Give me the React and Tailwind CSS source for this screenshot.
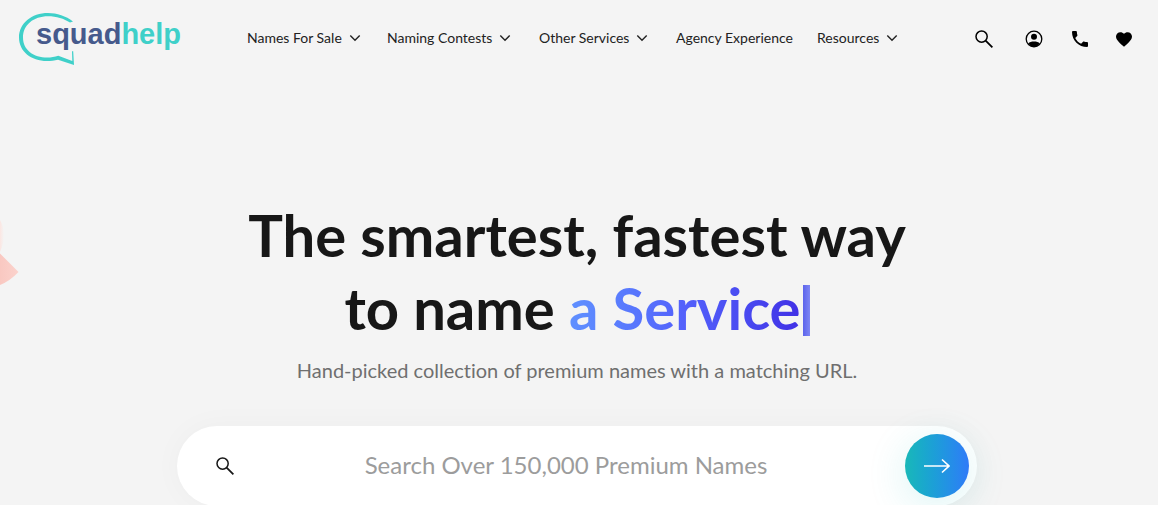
const navItems = [
  { label: "Names For Sale", menu: true },
  { label: "Naming Contests", menu: true },
  { label: "Other Services", menu: true },
  { label: "Agency Experience", menu: false },
  { label: "Resources", menu: true },
];

function Chevron() {
  return (
    <svg viewBox="0 0 12 8" className="h-2 w-3" fill="none" stroke="#222" strokeWidth="1.4" aria-hidden="true">
      <path d="M1.3 1.5 6 6.2l4.7-4.7" />
    </svg>
  );
}

function SearchIcon() {
  return (
    <svg viewBox="0 0 20 20" className="size-5" fill="none" stroke="currentColor" strokeWidth="1.5" aria-hidden="true">
      <circle cx="7.6" cy="7.6" r="5.6" />
      <path d="M11.6 11.6 18.4 18.4" strokeWidth="1.8" />
    </svg>
  );
}

function AccountIcon() {
  return (
    <svg viewBox="0 0 20 20" className="size-5" aria-hidden="true">
      <circle cx="10" cy="10" r="7.8" fill="none" stroke="currentColor" strokeWidth="1.3" />
      <circle cx="10" cy="7.8" r="3" fill="currentColor" />
      <path d="M4.2 14.6C5.4 13 7.6 12.600 10 12.600s4.600.4 5.800 2A7.600 7.600 0 0 1 10 18a7.600 7.600 0 0 1-5.800-3.400Z" fill="currentColor" />
    </svg>
  );
}

function PhoneIcon() {
  return (
    <svg viewBox="3 3 18 18" className="size-4" fill="currentColor" aria-hidden="true">
      <path d="M6.62 10.79c1.44 2.83 3.76 5.14 6.59 6.59l2.2-2.2c.27-.27.67-.36 1.02-.24 1.12.37 2.33.57 3.57.57.55 0 1 .45 1 1V20c0 .55-.45 1-1 1-9.39 0-17-7.61-17-17 0-.55.45-1 1-1h3.5c.55 0 1 .45 1 1 0 1.25.2 2.45.57 3.57.11.35.03.74-.25 1.02l-2.2 2.2z" />
    </svg>
  );
}

function HeartIcon() {
  return (
    <svg viewBox="2 3 20 18.4" className="h-[15px] w-4" fill="currentColor" aria-hidden="true">
      <path d="m12 21.35-1.45-1.32C5.4 15.36 2 12.28 2 8.5 2 5.42 4.42 3 7.5 3c1.74 0 3.41.81 4.5 2.09C13.09 3.81 14.76 3 16.5 3 19.58 3 22 5.42 22 8.5c0 3.78-3.4 6.86-8.55 11.54L12 21.35z" />
    </svg>
  );
}

function Logo() {
  return (
    <a href="#home" aria-label="squadhelp" className="block">
      <svg viewBox="0 0 166 54" className="h-[54px] w-[166px]" aria-hidden="true">
        <path
          fill="#3fd0c9"
          d="M54 8.500C47 3 38 0 29 0 12.500 0 0 10.500 0 24.500 0 38.500 12 48 28 48c4 0 7.500-.4 11-1.300L55 52 54.200 38.200l-1.200 0 .3 9.800-14-5.200c-3.500 1.200-7.300 1.800-11 1.800C14.500 44.600 4 37 4 24.500 4 12 14.500 3.300 29 3.300c8.500 0 16 2.300 22 6.300Z"
        />
        <text x="17" y="31" fontFamily="'Liberation Sans', Arial, sans-serif" fontSize="29" fontWeight="700">
          <tspan fill="#465a8c">squad</tspan><tspan fill="#3fd0c9">help</tspan>
        </text>
      </svg>
    </a>
  );
}

export default function App() {
  return (
    <div className="relative min-h-screen overflow-hidden bg-[#f4f4f4] font-['Lato',sans-serif] text-[#171717] [font-variant-ligatures:none]">
      <svg viewBox="0 0 20 90" className="absolute top-[210px] left-0 h-[90px] w-5" aria-hidden="true">
        <defs>
          <linearGradient id="wedge" x1="0" y1="0" x2="1" y2="0">
            <stop offset="0" stopColor="#f9c8c1" />
            <stop offset="1" stopColor="#fbd2cc" />
          </linearGradient>
          <linearGradient id="haze" x1="0" y1="0" x2="1" y2="0">
            <stop offset="0" stopColor="#fbe6e2" />
            <stop offset="1" stopColor="#f4f4f4" />
          </linearGradient>
        </defs>
        <path d="M0 10Q8 24 0 42Z" fill="url(#haze)" />
        <path d="M0 43.500 18.500 62Q10 71 0 75Z" fill="url(#wedge)" />
      </svg>

      <header className="flex h-20 items-center pr-[26px] pb-0.5 pl-[19px]">
        <div className="pt-0.5">
          <Logo />
        </div>
        <nav aria-label="Main" className="ml-[62px] grid grid-cols-[140px_152px_137px_141px_auto] pb-0.5 text-sm text-[#222]">
          {navItems.map((item) =>
            item.menu ? (
              <button key={item.label} type="button" className="flex items-center gap-[7px] whitespace-nowrap">
                {item.label}
                <Chevron />
              </button>
            ) : (
              <a key={item.label} href="#agency" className="whitespace-nowrap">
                {item.label}
              </a>
            )
          )}
        </nav>
        <div className="ml-auto flex items-center gap-7 text-black">
          <button type="button" aria-label="Search" className="mr-0.5">
            <SearchIcon />
          </button>
          <a href="#account" aria-label="Account">
            <AccountIcon />
          </a>
          <a href="#call" aria-label="Call us">
            <PhoneIcon />
          </a>
          <a href="#favorites" aria-label="Favorites">
            <HeartIcon />
          </a>
        </div>
      </header>

      <main className="flex flex-col items-center pt-[118px] pr-1 text-center">
        <h1 className="text-[58px] leading-[73px] font-bold">
          The smartest, fastest way
          <br />
          to name{" "}
          <span className="bg-linear-to-r from-[#6090ff] via-[#5360fb] to-[#4130e6] bg-clip-text text-transparent">a Service</span>
          <span className="ml-0.5 inline-block h-[51px] w-[7px] bg-linear-to-r from-[#5c63ec] to-[#7f86f3] align-[-6px]" />
        </h1>
        <p className="mt-2.5 text-xl leading-8 text-[#6f6f6f]">
          Hand-picked collection of premium names with a matching URL.
        </p>
        <form
          onSubmit={(event) => event.preventDefault()}
          className="mt-10 flex h-20 w-full max-w-[800px] items-center rounded-full bg-white pr-2 pl-[38px] shadow-[0_0_30px_rgba(0,0,0,0.03)]"
        >
          <label htmlFor="name-search" aria-label="Search names">
            <SearchIcon />
          </label>
          <input
            id="name-search"
            type="text"
            placeholder="Search Over 150,000 Premium Names"
            className="min-w-0 flex-1 bg-transparent pr-6 pb-0.5 pl-4 text-center text-2xl outline-none placeholder:text-[#9c9c9c]"
          />
          <button
            type="submit"
            aria-label="Submit search"
            className="flex size-16 items-center justify-center rounded-full bg-linear-to-r from-[#1ab8b8] to-[#2f7af8] text-white shadow-[0_8px_40px_rgba(26,184,184,0.16)]"
          >
            <svg viewBox="0 0 26 16" className="h-4 w-[26px]" fill="none" stroke="currentColor" strokeWidth="1.600" aria-hidden="true">
              <path d="M0 8h25M18 1.500 25 8l-7 6.500" />
            </svg>
          </button>
        </form>
      </main>
    </div>
  );
}
